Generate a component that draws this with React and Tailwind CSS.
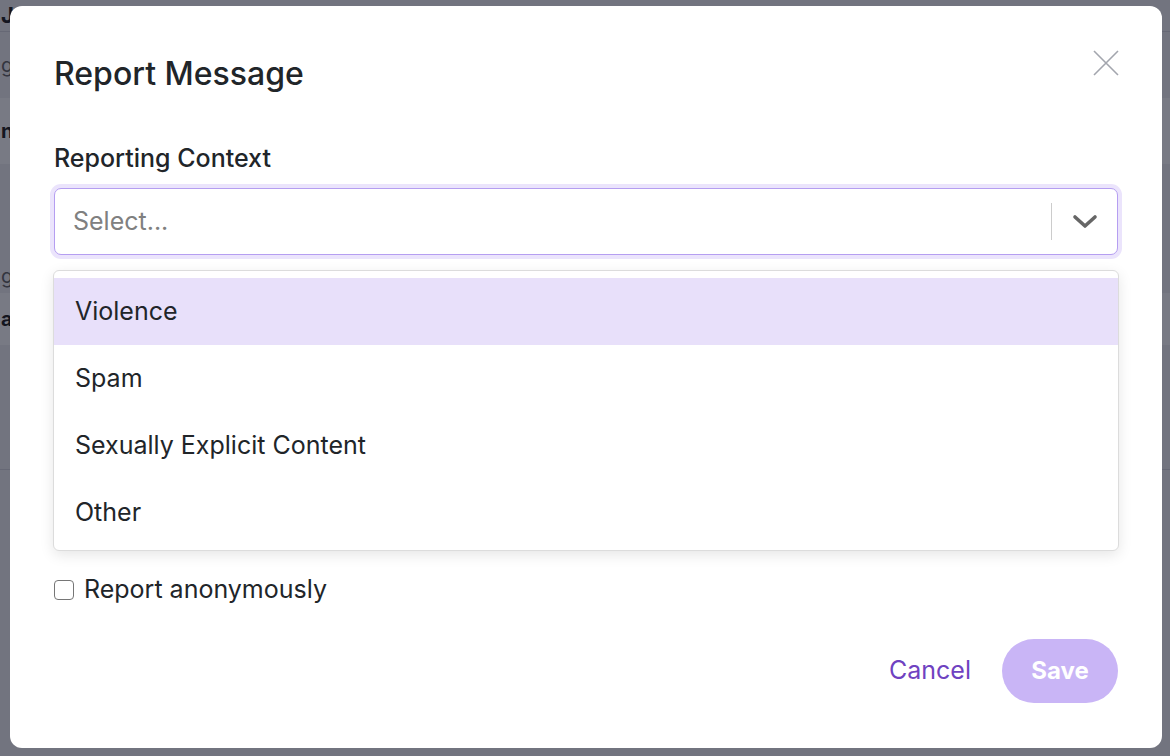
import React from "react";

function Background() {
  return (
    <div className="flex h-[756px] w-[1170px] flex-col bg-[#f1f1f4] text-[#222]">
      <div className="flex h-[32px] items-center border-b border-[#d8d8de] pl-[1px] text-[22px] font-bold">Ja</div>
      <div className="flex h-[66px] items-center pl-[1px] text-[20px] text-[#666]">ga</div>
      <div className="flex h-[66px] items-center bg-white pl-[1px] text-[20px] font-bold">n</div>
      <div className="h-[95px]" />
      <div className="flex h-[34px] items-center pl-[1px] text-[20px] text-[#666]">ga</div>
      <div className="flex h-[52px] items-center bg-white pl-[1px] text-[20px] font-bold">ar</div>
      <div className="h-[125px] border-b border-[#d8d8de]" />
    </div>
  );
}

function CloseIcon() {
  return (
    <svg width="26" height="26" viewBox="0 0 26 26" fill="none">
      <path d="M1 1 L25 25 M25 1 L1 25" stroke="#a3a6ae" strokeWidth="1.6" />
    </svg>
  );
}

function Chevron() {
  return (
    <svg width="26" height="16" viewBox="0 0 26 16" fill="none">
      <path d="M3 3 L13 12 L23 3" stroke="#666666" strokeWidth="3.6" strokeLinecap="round" strokeLinejoin="round" />
    </svg>
  );
}

export default function App() {
  const options = ["Violence", "Spam", "Sexually Explicit Content", "Other"];
  return (
    <div className="relative h-[756px] w-[1170px] overflow-hidden" style={{ fontFamily: "Inter, 'Noto Sans', sans-serif" }}>
      <Background />
      <div className="absolute inset-0 bg-[#0a0d1f]/55" />
      <div className="absolute left-[10px] top-[6px] flex h-[742px] w-[1152px] flex-col rounded-[12px] bg-white px-[44px] pt-[50px]">
        <button className="absolute right-[43px] top-[44px]">
          <CloseIcon />
        </button>
        <h2 className="h-[36px] text-[32px] font-medium leading-[36px] text-[#212529]">Report Message</h2>
        <label className="mt-[52px] h-[28px] text-[25px] font-medium leading-[28px] text-[#212529]">Reporting Context</label>
        <div className="relative mt-[16px]">
          <div className="flex h-[67px] items-center rounded-[7px] border border-[#b59ef1] bg-white shadow-[0_0_0_4px_#ebe4fc]">
            <span className="flex-1 pl-[18px] text-[25px] text-[#808080]">Select...</span>
            <span className="h-[37px] w-px bg-[#cccccc]" />
            <span className="flex w-[65px] items-center justify-center">
              <Chevron />
            </span>
          </div>
          <div className="absolute left-[-1px] right-[-1px] top-[82px] z-10 rounded-[6px] border border-[#dcdcdc] bg-white pb-[4px] pt-[7px] shadow-[0_4px_14px_rgba(0,0,0,0.1)]">
            {options.map((o, i) => (
              <div
                key={o}
                className={
                  i === 0
                    ? "flex h-[67px] items-center bg-[#e8e0fa] px-[21px] text-[25px] text-[#212529]"
                    : "flex h-[67px] items-center px-[21px] text-[25px] text-[#212529]"
                }
              >
                {o}
              </div>
            ))}
          </div>
        </div>
        <div className="h-[321px]" />
        <label className="flex h-[28px] items-center gap-[10px] text-[25px] text-[#212529]">
          <span className="h-[20px] w-[20px] rounded-[4px] border-[1.5px] border-[#767676] bg-white" />
          Report anonymously
        </label>
        <div className="mt-[35px] flex items-center justify-end gap-[31px]">
          <button className="text-[25px] text-[#6f42c1]">Cancel</button>
          <button className="h-[64px] w-[116px] rounded-full bg-[#c9b5f6] text-[24px] font-bold text-white">Save</button>
        </div>
      </div>
    </div>
  );
}
